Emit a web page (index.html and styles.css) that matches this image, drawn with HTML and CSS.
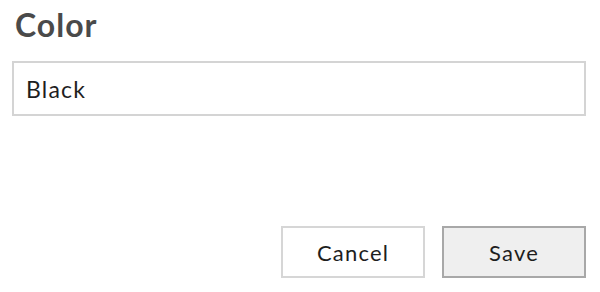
FILE: index.html
```html
<!DOCTYPE html>
<html>
<head>
<meta charset="utf-8">
<link rel="stylesheet" href="styles.css">
</head>
<body>
<div class="dialog">
  <h1 class="title">Color</h1>
  <input class="field" type="text" value="Black">
  <div class="actions">
    <button class="btn">Cancel</button>
    <button class="btn btn-primary">Save</button>
  </div>
</div>
</body>
</html>
```
FILE: styles.css
```css
html, body {
  margin: 0;
  padding: 0;
  background: #fff;
}
body {
  font-family: Lato, "Open Sans", sans-serif;
  width: 600px;
  height: 292px;
  overflow: hidden;
}
.dialog {
  display: flex;
  flex-direction: column;
  padding: 5px 14px 0 12px;
}
.title {
  margin: 0 0 0 3px;
  font-size: 32px;
  font-weight: 700;
  color: #4a4a4a;
  line-height: 40px;
  letter-spacing: 1px;
}
.field {
  margin-top: 16px;
  box-sizing: border-box;
  width: 574px;
  height: 55px;
  border: 2px solid #d4d4d4;
  padding: 0 12px;
  font-family: Lato, sans-serif;
  font-size: 23px;
  letter-spacing: 1.2px;
  color: #1e1e1e;
  outline: none;
}
.actions {
  display: flex;
  justify-content: flex-end;
  gap: 17px;
  margin-top: 110px;
}
.btn {
  box-sizing: border-box;
  width: 144px;
  height: 52px;
  background: #fff;
  border: 2px solid #d6d6d6;
  font-family: Lato, sans-serif;
  font-size: 22px;
  letter-spacing: 1.2px;
  color: #1e1e1e;
  padding: 0;
}
.btn-primary {
  background: #efefef;
  border-color: #a8a8a8;
}
```
